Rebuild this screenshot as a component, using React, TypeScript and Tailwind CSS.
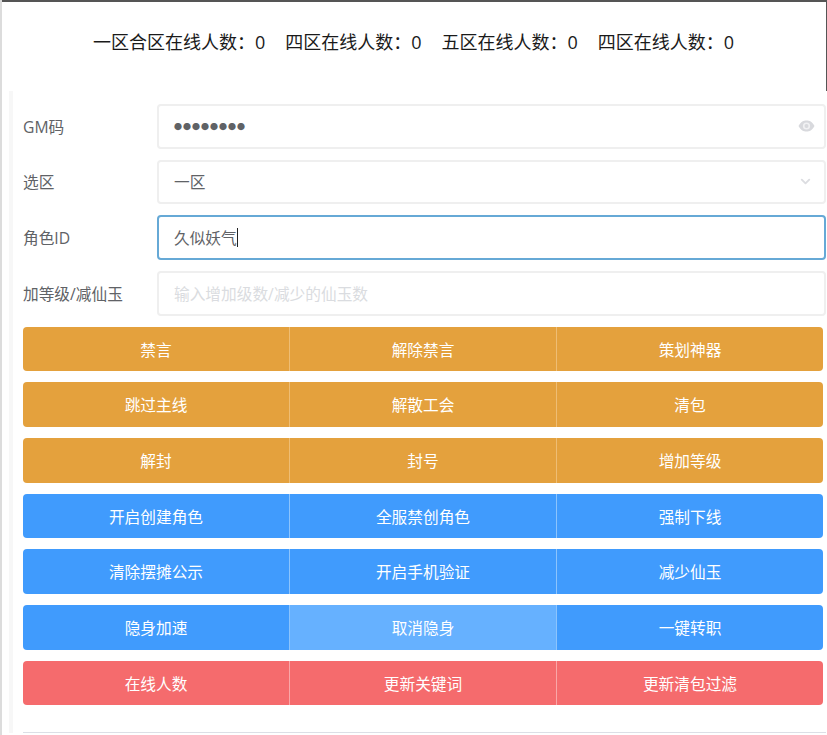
import { ChevronDown } from "lucide-react";

const counts = ["一区合区在线人数：0", "四区在线人数：0", "五区在线人数：0", "四区在线人数：0"];

const buttonRows = [
    { color: "bg-[#e4a13d]", line: "border-[#eebd74]", labels: ["禁言", "解除禁言", "策划神器"] },
    { color: "bg-[#e4a13d]", line: "border-[#eebd74]", labels: ["跳过主线", "解散工会", "清包"] },
    { color: "bg-[#e4a13d]", line: "border-[#eebd74]", labels: ["解封", "封号", "增加等级"] },
    { color: "bg-[#409bfd]", line: "border-[#8cc4fd]", labels: ["开启创建角色", "全服禁创角色", "强制下线"] },
    { color: "bg-[#409bfd]", line: "border-[#8cc4fd]", labels: ["清除摆摊公示", "开启手机验证", "减少仙玉"] },
    { color: "bg-[#409bfd]", line: "border-[#8cc4fd]", labels: ["隐身加速", "取消隐身", "一键转职"] },
    { color: "bg-[#f56b6d]", line: "border-[#f9a7a8]", labels: ["在线人数", "更新关键词", "更新清包过滤"] },
];

const FormRow = ({ label, children }: { label: string; children: React.ReactNode }) => {
    return (
        <div className="flex items-center h-[44.67px]">
            <label className="w-[134px] shrink-0 pt-[2px] text-[15.7px] text-[#606266]">{label}</label>
            {children}
        </div>
    );
};

export default function App() {
    return (
        <div className="w-[827px] h-[735px] overflow-hidden bg-white border-l-2 border-[#dcdcdc] font-['Open_Sans','Noto_Sans_CJK_SC',sans-serif]">
            <div className="h-[91px] pb-[8px] border-t-2 border-t-[#555555] border-r border-r-[#555555] flex items-center justify-center gap-[20px] pr-[1px] text-[18px] text-[#1a1a1a]">
                {counts.map((c, i) => (
                    <span key={i}>{c}</span>
                ))}
            </div>
            <div className="ml-[7px] pl-[10px] pr-[1px] pt-[13px] border-l-4 border-[#f7f7f7] flex flex-col">
                <div className="flex flex-col gap-[11px]">
                    <FormRow label="GM码">
                        <div className="flex-1 h-full rounded-[4px] border-2 border-[#efefef] flex items-center justify-between pl-[15px] pr-[9px]">
                            <span className="pt-[2px] text-[8px] tracking-[1px] text-[#606266]">●●●●●●●●</span>
                            <svg width="17" height="12" viewBox="0 0 17 12">
                                <path d="M0.5 6 C3 1.5 5.5 0.5 8.5 0.5 C11.5 0.5 14 1.5 16.5 6 C14 10.5 11.5 11.5 8.5 11.5 C5.5 11.5 3 10.5 0.5 6 Z" fill="#d8d9dd" />
                                <circle cx="8.5" cy="6" r="3.6" fill="#f1f1f3" />
                                <circle cx="8.5" cy="6" r="2" fill="#d8d9dd" />
                            </svg>
                        </div>
                    </FormRow>
                    <FormRow label="选区">
                        <div className="flex-1 h-full rounded-[4px] border-2 border-[#efefef] flex items-center justify-between pl-[15px] pr-[11px]">
                            <span className="pt-[2px] text-[15.7px] text-[#606266]">一区</span>
                            <ChevronDown size={15} strokeWidth={3} className="text-[#dcdde1]" />
                        </div>
                    </FormRow>
                    <FormRow label="角色ID">
                        <div className="flex-1 h-full rounded-[4px] border-2 border-[#66a9d6] flex items-center pl-[15px]">
                            <span className="pt-[2px] text-[15.7px] text-[#606266]">久似妖气</span>
                            <span className="w-[1px] h-[19px] bg-[#222222]" />
                        </div>
                    </FormRow>
                    <FormRow label="加等级/减仙玉">
                        <div className="flex-1 h-full rounded-[4px] border-2 border-[#efefef] flex items-center pl-[15px]">
                            <span className="pt-[2px] text-[15.7px] text-[#dadce0]">输入增加级数/减少的仙玉数</span>
                        </div>
                    </FormRow>
                </div>
                <div className="mt-[11px] flex flex-col gap-[11px] w-[800px]">
                    {buttonRows.map((row, i) => (
                        <div key={i} className={`flex h-[44.67px] rounded-[4px] overflow-hidden ${row.color}`}>
                            {row.labels.map((text, j) => (
                                <button
                                    key={j}
                                    className={
                                        "flex-1 pt-[3px] text-[15.7px] text-white " +
                                        (j > 0 ? `border-l ${row.line} ` : "") +
                                        (text === "取消隐身" ? "bg-[#66b1ff]" : "")
                                    }
                                >
                                    {text}
                                </button>
                            ))}
                        </div>
                    ))}
                </div>
                <div className="mt-[27px] border-t border-[#dcdfe6]" />
            </div>
        </div>
    );
}
